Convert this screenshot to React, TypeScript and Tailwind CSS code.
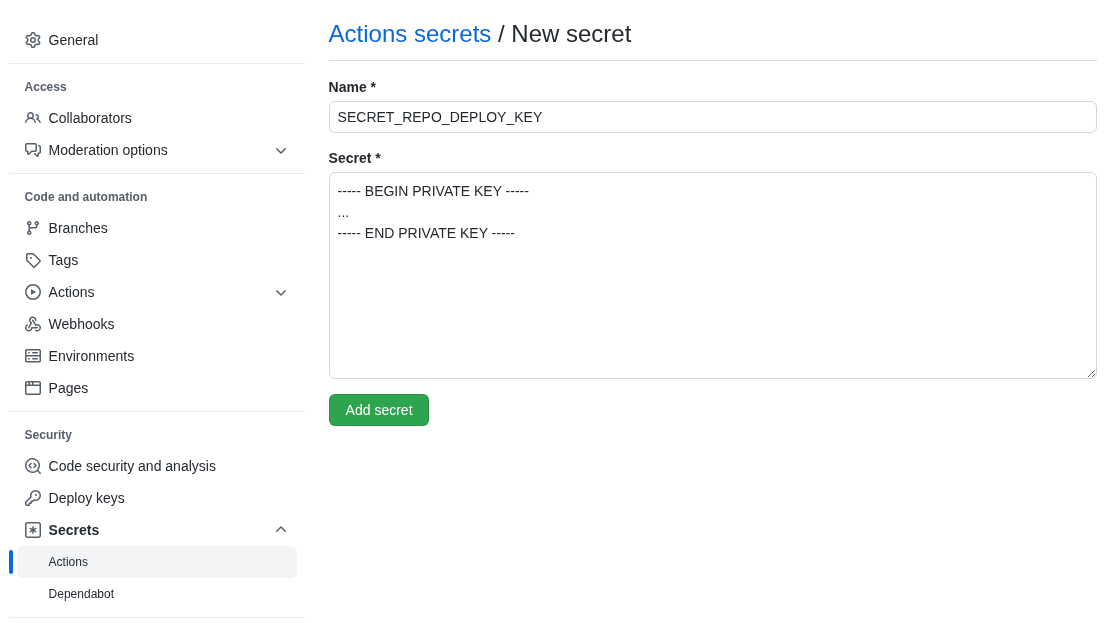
const icons = {
  gear: "M8 0a8.2 8.2 0 0 1 .701.031C9.444.095 9.99.645 10.16 1.29l.288 1.107c.018.066.079.158.212.224.231.114.454.243.668.386.123.082.233.09.299.071l1.103-.303c.644-.176 1.392.021 1.82.63.27.385.506.792.704 1.218.315.675.111 1.422-.364 1.891l-.814.806c-.049.048-.098.147-.088.294.016.257.016.515 0 .772-.01.147.038.246.088.294l.814.806c.475.469.679 1.216.364 1.891a7.977 7.977 0 0 1-.704 1.217c-.428.61-1.176.807-1.82.63l-1.102-.302c-.067-.019-.177-.011-.3.071a5.909 5.909 0 0 1-.668.386c-.133.066-.194.158-.211.224l-.29 1.106c-.168.646-.715 1.196-1.458 1.26a8.006 8.006 0 0 1-1.402 0c-.743-.064-1.289-.614-1.458-1.26l-.289-1.106c-.018-.066-.079-.158-.212-.224a5.738 5.738 0 0 1-.668-.386c-.123-.082-.233-.09-.299-.071l-1.103.303c-.644.176-1.392-.021-1.82-.63a8.12 8.12 0 0 1-.704-1.218c-.315-.675-.111-1.422.363-1.891l.815-.806c.05-.048.098-.147.088-.294a6.214 6.214 0 0 1 0-.772c.01-.147-.038-.246-.088-.294l-.815-.806C.635 6.045.431 5.298.746 4.623a7.92 7.92 0 0 1 .704-1.217c.428-.61 1.176-.807 1.82-.63l1.102.302c.067.019.177.011.3-.071.214-.143.437-.272.668-.386.133-.066.194-.158.211-.224l.29-1.106C6.009.645 6.556.095 7.299.03 7.53.01 7.764 0 8 0Zm-.571 1.525c-.036.003-.108.036-.137.146l-.289 1.105c-.147.561-.549.967-.998 1.189-.173.086-.34.183-.5.29-.417.278-.97.423-1.529.27l-1.103-.303c-.109-.03-.175.016-.195.045-.22.312-.412.644-.573.99-.014.031-.021.11.059.19l.815.806c.411.406.562.957.53 1.456a4.709 4.709 0 0 0 0 .582c.032.499-.119 1.05-.53 1.456l-.815.806c-.081.08-.073.159-.059.19.162.346.353.677.573.989.02.03.085.076.195.046l1.102-.303c.56-.153 1.113-.008 1.53.27.161.107.328.204.501.29.447.222.85.629.997 1.189l.289 1.105c.029.109.101.143.137.146a6.6 6.6 0 0 0 1.142 0c.036-.003.108-.036.137-.146l.289-1.105c.147-.561.549-.967.998-1.189.173-.086.34-.183.5-.29.417-.278.97-.423 1.529-.27l1.103.303c.109.029.175-.016.195-.045.22-.313.411-.644.573-.99.014-.031.021-.11-.059-.19l-.815-.806c-.411-.406-.562-.957-.53-1.456a4.709 4.709 0 0 0 0-.582c-.032-.499.119-1.05.53-1.456l.815-.806c.081-.08.073-.159.059-.19a6.464 6.464 0 0 0-.573-.989c-.02-.03-.085-.076-.195-.046l-1.102.303c-.56.153-1.113.008-1.53-.27a4.44 4.44 0 0 0-.501-.29c-.447-.222-.85-.629-.997-1.189l-.289-1.105c-.029-.11-.101-.143-.137-.146a6.6 6.6 0 0 0-1.142 0ZM11 8a3 3 0 1 1-6 0 3 3 0 0 1 6 0ZM9.5 8a1.5 1.5 0 1 0-3.001.001A1.5 1.5 0 0 0 9.5 8Z",
  people:
    "M2 5.5a3.5 3.5 0 1 1 5.898 2.549 5.508 5.508 0 0 1 3.034 4.084.75.75 0 1 1-1.482.235 4 4 0 0 0-7.9 0 .75.75 0 0 1-1.482-.236A5.507 5.507 0 0 1 3.102 8.05 3.493 3.493 0 0 1 2 5.5ZM11 4a3.001 3.001 0 0 1 2.22 5.018 5.01 5.01 0 0 1 2.56 3.012.749.749 0 0 1-.885.954.752.752 0 0 1-.549-.514 3.507 3.507 0 0 0-2.522-2.372.75.75 0 0 1-.574-.73v-.352a.75.75 0 0 1 .416-.672A1.5 1.5 0 0 0 11 5.5.75.75 0 0 1 11 4Zm-5.5-.5a2 2 0 1 0-.001 3.999A2 2 0 0 0 5.5 3.5Z",
  discussion:
    "M1.75 1h8.5c.966 0 1.75.784 1.75 1.75v5.5A1.75 1.75 0 0 1 10.25 10H7.061l-2.574 2.573A1.458 1.458 0 0 1 2 11.543V10h-.25A1.75 1.75 0 0 1 0 8.25v-5.5C0 1.784.784 1 1.75 1ZM1.5 2.75v5.5c0 .138.112.25.25.25h1a.75.75 0 0 1 .75.75v2.19l2.72-2.72a.749.749 0 0 1 .53-.22h3.5a.25.25 0 0 0 .25-.25v-5.5a.25.25 0 0 0-.25-.25h-8.5a.25.25 0 0 0-.25.25Zm13 2a.25.25 0 0 0-.25-.25h-.5a.75.75 0 0 1 0-1.5h.5c.966 0 1.75.784 1.75 1.75v5.5A1.75 1.75 0 0 1 14.25 12H14v1.543a1.458 1.458 0 0 1-2.487 1.03L9.22 12.28a.749.749 0 0 1 .326-1.275.749.749 0 0 1 .734.215l2.22 2.22v-2.19a.75.75 0 0 1 .75-.75h1a.25.25 0 0 0 .25-.25Z",
  branch:
    "M9.5 3.25a2.25 2.25 0 1 1 3 2.122V6A2.5 2.5 0 0 1 10 8.5H6a1 1 0 0 0-1 1v1.128a2.251 2.251 0 1 1-1.5 0V5.372a2.25 2.25 0 1 1 1.5 0v1.836A2.493 2.493 0 0 1 6 7h4a1 1 0 0 0 1-1v-.628A2.25 2.25 0 0 1 9.5 3.25Zm-6 0a.75.75 0 1 0 1.5 0 .75.75 0 0 0-1.5 0Zm8.25-.75a.75.75 0 1 0 0 1.5.75.75 0 0 0 0-1.5ZM4.25 12a.75.75 0 1 0 0 1.5.75.75 0 0 0 0-1.5Z",
  tag: "M1 7.775V2.75C1 1.784 1.784 1 2.75 1h5.025c.464 0 .91.184 1.238.513l6.25 6.25a1.75 1.75 0 0 1 0 2.474l-5.026 5.026a1.75 1.75 0 0 1-2.474 0l-6.25-6.25A1.752 1.752 0 0 1 1 7.775Zm1.5 0c0 .066.026.13.073.177l6.25 6.25a.25.25 0 0 0 .354 0l5.025-5.025a.25.25 0 0 0 0-.354l-6.25-6.25a.25.25 0 0 0-.177-.073H2.75a.25.25 0 0 0-.25.25ZM6 5a1 1 0 1 1 0 2 1 1 0 0 1 0-2Z",
  play: "M8 0a8 8 0 1 1 0 16A8 8 0 0 1 8 0ZM1.5 8a6.5 6.5 0 1 0 13 0 6.5 6.5 0 0 0-13 0Zm4.879-2.773 4.264 2.559a.25.25 0 0 1 0 .428l-4.264 2.559A.25.25 0 0 1 6 10.559V5.442a.25.25 0 0 1 .379-.215Z",
  webhook:
    "M5.5 4.25a2.25 2.25 0 0 1 4.5 0 .75.75 0 0 0 1.5 0 3.75 3.75 0 1 0-6.14 2.889l-2.272 4.258a.75.75 0 0 0 1.324.706L7 7.25a.75.75 0 0 0-.309-1.015A2.25 2.25 0 0 1 5.5 4.25Z M7.364 3.607a.75.75 0 0 1 1.03.257l2.608 4.349a3.75 3.75 0 1 1-.628 6.785.75.75 0 0 1 .752-1.299 2.25 2.25 0 1 0-.033-3.88.75.75 0 0 1-1.03-.256L7.107 4.636a.75.75 0 0 1 .257-1.03Z M2.9 8.776A.75.75 0 0 1 2.625 9.8 2.25 2.25 0 1 0 6 11.75a.75.75 0 0 1 .75-.751h5.5a.75.75 0 0 1 0 1.5H7.425a3.751 3.751 0 1 1-5.55-3.998.75.75 0 0 1 1.024.274Z",
  server:
    "M1.75 1h12.5c.966 0 1.75.784 1.75 1.75v4c0 .372-.116.717-.314 1 .198.283.314.628.314 1v4a1.75 1.75 0 0 1-1.75 1.75H1.75A1.75 1.75 0 0 1 0 12.75v-4c0-.358.109-.707.314-1a1.739 1.739 0 0 1-.314-1v-4C0 1.784.784 1 1.75 1ZM1.5 2.75v4c0 .138.112.25.25.25h12.5a.25.25 0 0 0 .25-.25v-4a.25.25 0 0 0-.25-.25H1.75a.25.25 0 0 0-.25.25Zm.25 5.75a.25.25 0 0 0-.25.25v4c0 .138.112.25.25.25h12.5a.25.25 0 0 0 .25-.25v-4a.25.25 0 0 0-.25-.25ZM7 4.75A.75.75 0 0 1 7.75 4h4.5a.75.75 0 0 1 0 1.5h-4.5A.75.75 0 0 1 7 4.75ZM7.75 10h4.5a.75.75 0 0 1 0 1.5h-4.5a.75.75 0 0 1 0-1.5ZM3 4.75A.75.75 0 0 1 3.75 4h.5a.75.75 0 0 1 0 1.5h-.5A.75.75 0 0 1 3 4.75ZM3.75 10h.5a.75.75 0 0 1 0 1.5h-.5a.75.75 0 0 1 0-1.5Z",
  browser:
    "M0 2.75C0 1.784.784 1 1.75 1h12.5c.966 0 1.75.784 1.75 1.75v10.5A1.75 1.75 0 0 1 14.25 15H1.75A1.75 1.75 0 0 1 0 13.25ZM14.5 6h-13v7.25c0 .138.112.25.25.25h12.5a.25.25 0 0 0 .25-.25Zm-6-3.5v2h6V2.75a.25.25 0 0 0-.25-.25ZM5 2.5v2h2v-2Zm-3.25 0a.25.25 0 0 0-.25.25V4.5h2v-2Z",
  codescan:
    "M8.47 4.97a.75.75 0 0 0 0 1.06L9.94 7.5 8.47 8.97a.75.75 0 1 0 1.06 1.06l2-2a.75.75 0 0 0 0-1.06l-2-2a.75.75 0 0 0-1.06 0ZM6.53 6.03a.75.75 0 0 0-1.06-1.06l-2 2a.75.75 0 0 0 0 1.06l2 2a.75.75 0 1 0 1.06-1.06L5.06 7.5l1.47-1.47Z M12.246 13.307a7.501 7.501 0 1 1 1.06-1.06l2.474 2.473a.749.749 0 0 1-.326 1.275.749.749 0 0 1-.734-.215ZM1.5 7.5a6.002 6.002 0 0 0 3.608 5.504 6.002 6.002 0 0 0 6.486-1.117.748.748 0 0 1 .292-.293A6 6 0 1 0 1.5 7.5Z",
  key: "M10.5 0a5.499 5.499 0 1 1-1.288 10.848l-.932.932a.749.749 0 0 1-.53.22H7v.75a.749.749 0 0 1-.22.53l-.5.5a.749.749 0 0 1-.53.22H5v.75a.749.749 0 0 1-.22.53l-.5.5a.749.749 0 0 1-.53.22h-2A1.75 1.75 0 0 1 0 14.25v-2c0-.199.079-.389.22-.53l4.932-4.932A5.5 5.5 0 0 1 10.5 0Zm-4 5.5c-.001.431.069.86.205 1.269a.75.75 0 0 1-.181.768L1.5 12.56v1.69c0 .138.112.25.25.25h1.69l.06-.06v-1.19a.75.75 0 0 1 .75-.75h1.19l.06-.06v-1.19a.75.75 0 0 1 .75-.75h1.19l1.023-1.025a.75.75 0 0 1 .768-.18A4 4 0 1 0 6.5 5.5ZM11 6a1 1 0 1 1 0-2 1 1 0 0 1 0 2Z",
  asterisk:
    "M0 2.75A2.75 2.75 0 0 1 2.75 0h10.5A2.75 2.75 0 0 1 16 2.75v10.5A2.75 2.75 0 0 1 13.25 16H2.75A2.75 2.75 0 0 1 0 13.25ZM2.75 1.5c-.69 0-1.25.56-1.25 1.25v10.5c0 .69.56 1.25 1.25 1.25h10.5c.69 0 1.25-.56 1.25-1.25V2.75c0-.69-.56-1.25-1.25-1.25Z M8 4a.75.75 0 0 1 .75.75V6.7l1.69-.975a.75.75 0 0 1 .75 1.3L9.5 8l1.69.976a.75.75 0 0 1-.75 1.298L8.75 9.3v1.951a.75.75 0 0 1-1.5 0V9.299l-1.69.976a.75.75 0 0 1-.75-1.3L6.5 8l-1.69-.975a.75.75 0 0 1 .75-1.3l1.69.976V4.75A.75.75 0 0 1 8 4Z",
  chevronDown:
    "M12.78 6.22a.75.75 0 0 1 0 1.06l-4.25 4.25a.75.75 0 0 1-1.06 0L3.22 7.28a.75.75 0 0 1 1.06-1.06L8 9.94l3.72-3.72a.75.75 0 0 1 1.06 0Z",
  chevronUp:
    "M3.22 9.78a.75.75 0 0 1 0-1.06l4.25-4.25a.75.75 0 0 1 1.06 0l4.25 4.25a.75.75 0 0 1-1.06 1.06L8 6.06 4.28 9.78a.75.75 0 0 1-1.06 0Z",
};

type IconName = keyof typeof icons;

function Octicon({ name, className }: { name: IconName; className?: string }) {
  return (
    <svg width={16} height={16} viewBox="0 0 16 16" fill="currentColor" className={className}>
      <path d={icons[name]} />
    </svg>
  );
}

type RowProps = {
  icon: IconName;
  label: string;
  chevron?: "up" | "down";
  bold?: boolean;
};

function NavRow({ icon, label, chevron, bold }: RowProps) {
  return (
    <a href="#" className="mx-2 flex h-8 items-center rounded-md px-2 text-sm text-[#24292f]">
      <Octicon name={icon} className="mr-2 shrink-0 text-[#57606a]" />
      <span className={bold ? "flex-1 font-semibold" : "flex-1"}>{label}</span>
      {chevron === "down" && <Octicon name="chevronDown" className="text-[#57606a]" />}
      {chevron === "up" && <Octicon name="chevronUp" className="text-[#57606a]" />}
    </a>
  );
}

function SubRow({ label, active }: { label: string; active?: boolean }) {
  return (
    <div className="relative">
      {active && <span className="absolute top-1 left-0 h-6 w-1 rounded-md bg-[#0969da]" />}
      <a
        href="#"
        className={`mx-2 flex h-8 items-center rounded-md pl-8 text-xs text-[#24292f] ${active ? "bg-[#f3f4f6]" : ""}`}
      >
        {label}
      </a>
    </div>
  );
}

function Divider() {
  return <div className="mt-[7px] h-px bg-[#eaedf0]" />;
}

function Heading({ children }: { children: string }) {
  return <div className="px-4 pt-[14px] pb-[6px] text-xs leading-[18px] font-semibold text-[#57606a]">{children}</div>;
}

export default function App() {
  return (
    <div className="flex h-[623px] gap-6 overflow-hidden pr-[21px] pl-[8.6px] font-['Liberation_Sans',Arial,sans-serif] text-[#24292f] [will-change:transform]">
      {/* Sidebar */}
      <nav className="w-[296px] shrink-0 pt-6">
        <NavRow icon="gear" label="General" />
        <Divider />

        <Heading>Access</Heading>
        <NavRow icon="people" label="Collaborators" />
        <NavRow icon="discussion" label="Moderation options" chevron="down" />
        <Divider />

        <Heading>Code and automation</Heading>
        <NavRow icon="branch" label="Branches" />
        <NavRow icon="tag" label="Tags" />
        <NavRow icon="play" label="Actions" chevron="down" />
        <NavRow icon="webhook" label="Webhooks" />
        <NavRow icon="server" label="Environments" />
        <NavRow icon="browser" label="Pages" />
        <Divider />

        <Heading>Security</Heading>
        <NavRow icon="codescan" label="Code security and analysis" />
        <NavRow icon="key" label="Deploy keys" />
        <NavRow icon="asterisk" label="Secrets" chevron="up" bold />
        <SubRow label="Actions" active />
        <SubRow label="Dependabot" />
        <Divider />
      </nav>

      {/* Main form */}
      <main className="w-[768px] shrink-0">
        <div className="border-b border-[#d8dee4] pt-4 pb-2">
          <h2 className="text-2xl leading-9 font-normal">
            <a href="#" className="text-[#0969da]">
              Actions secrets
            </a>{" "}
            / New secret
          </h2>
        </div>

        <form>
          <label className="mt-4 mb-[3px] block text-sm leading-[21px] font-semibold">Name *</label>
          <input
            type="text"
            defaultValue="SECRET_REPO_DEPLOY_KEY"
            className="block h-8 w-full rounded-md border border-[#d0d7de] px-2 text-sm leading-5 text-[#24292f]"
          />

          <label className="mt-[15px] mb-[3px] block text-sm leading-[21px] font-semibold">Secret *</label>
          <textarea
            defaultValue={"----- BEGIN PRIVATE KEY -----\n...\n----- END PRIVATE KEY -----"}
            className="block h-[207px] w-full resize-y rounded-md border border-[#d0d7de] px-2 py-2 text-sm leading-[21px] text-[#24292f]"
          />

          <button
            type="button"
            className="mt-[15px] h-8 w-[100px] rounded-md border border-[#1b1f2426] bg-[#2da44e] pl-4 text-left text-sm text-white"
          >
            Add secret
          </button>
        </form>
      </main>
    </div>
  );
}
